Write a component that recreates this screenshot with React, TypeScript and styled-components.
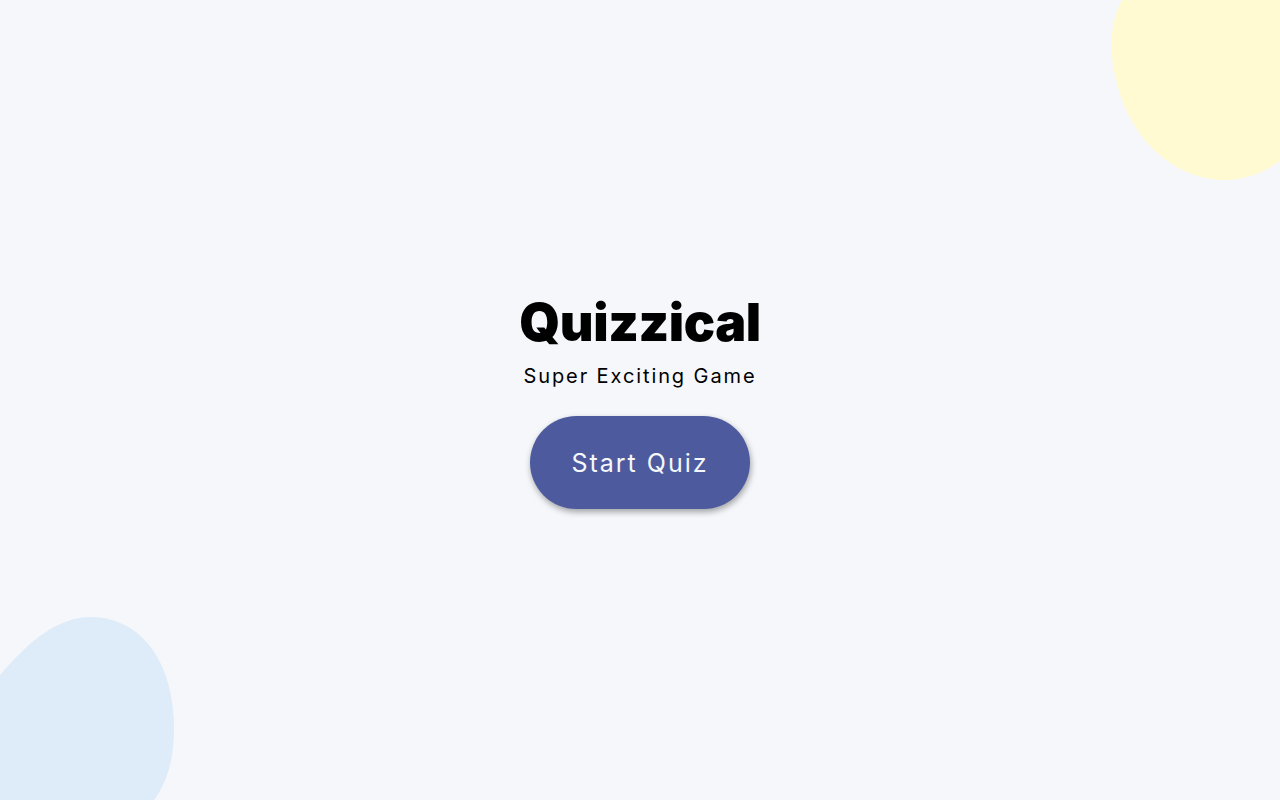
import React from "react";
import styled, { createGlobalStyle } from "styled-components";

const GlobalStyle = createGlobalStyle`
  html, body { margin: 0; padding: 0; }
  body {
    background: #F5F7FB;
    font-family: Inter, "Noto Sans", sans-serif;
    color: #000;
    overflow: hidden;
  }
`;

const Page = styled.main`
  position: relative;
  min-height: 100vh;
  display: flex;
  flex-direction: column;
  align-items: center;
  justify-content: center;
  padding-top: 2px;
  box-sizing: border-box;
`;

const Blob = styled.svg`
  position: absolute;
  pointer-events: none;
`;

const Title = styled.h1`
  margin: 0;
  font-size: 52px;
  line-height: 60px;
  font-weight: 900;
  letter-spacing: -0.4px;
`;

const Subtitle = styled.p`
  margin: 11px 0 0;
  font-size: 20px;
  line-height: 24px;
  font-weight: 400;
  letter-spacing: 1.9px;
`;

const StartButton = styled.button`
  margin-top: 28px;
  width: 220px;
  height: 93px;
  border: none;
  border-radius: 47px;
  background: #4D5B9E;
  color: #F5F7FB;
  font-family: Inter, "Noto Sans", sans-serif;
  font-size: 25px;
  letter-spacing: 2px;
  box-shadow: 1px 3px 6px rgba(0, 0, 0, 0.35);
  cursor: pointer;
`;

export default function App() {
  return (
    <>
      <GlobalStyle />
      <Page>
        <Blob
          width="180"
          height="185"
          viewBox="1100 0 180 185"
          style={{ top: 0, right: 0 }}
        >
          <path
            d="M1122,0 C1108,25 1108,60 1122,100 C1140,148 1180,181 1228,180 C1248,179 1266,171 1280,161 L1280,0 Z"
            fill="#FFFAD1"
          />
        </Blob>
        <Blob
          width="180"
          height="185"
          viewBox="0 615 180 185"
          style={{ bottom: 0, left: 0 }}
        >
          <path
            d="M0,675 C30,640 58,617 92,617 C140,618 174,660 174,730 C174,760 166,784 154,800 L0,800 Z"
            fill="#DEEBF8"
          />
        </Blob>
        <Title>Quizzical</Title>
        <Subtitle>Super Exciting Game</Subtitle>
        <StartButton>Start Quiz</StartButton>
      </Page>
    </>
  );
}
